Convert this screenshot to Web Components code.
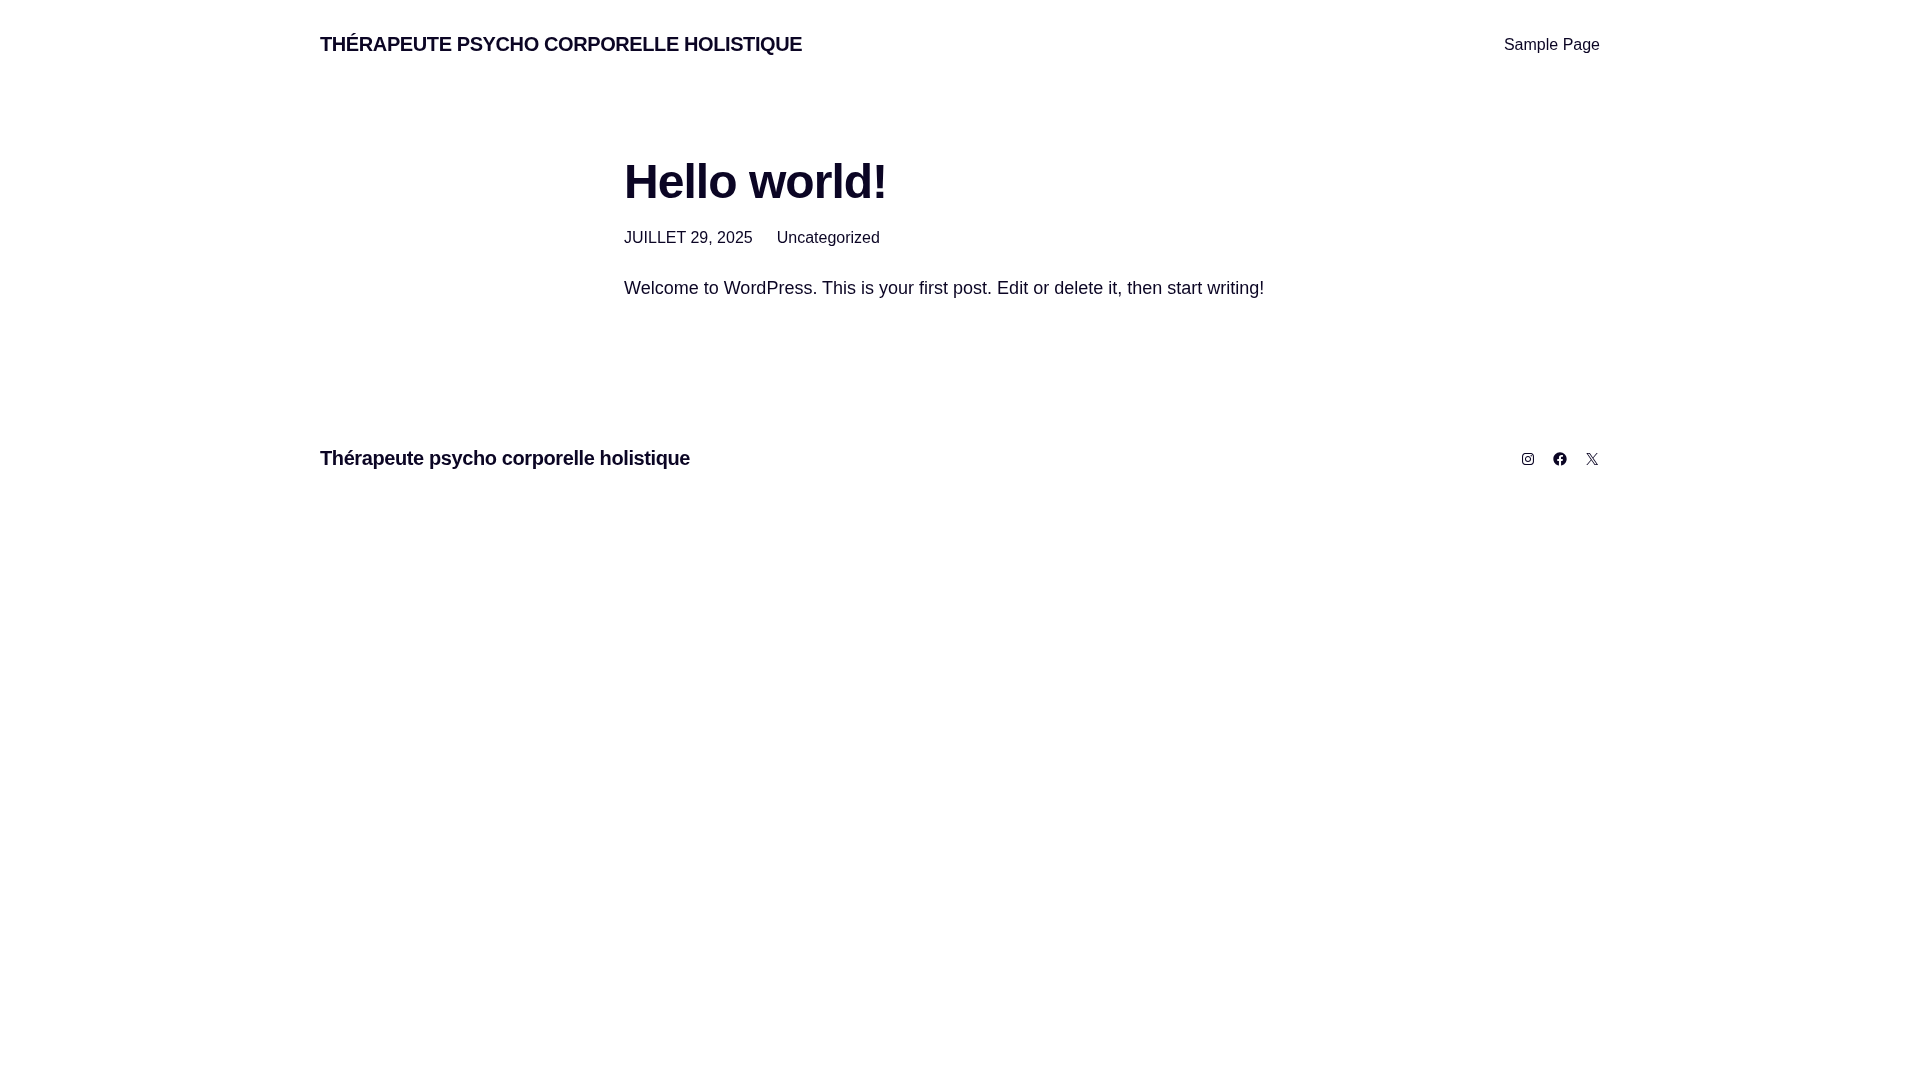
<!DOCTYPE html>
<html lang="fr">
<head>
<meta charset="utf-8">
<title>Thérapeute psycho corporelle holistique</title>
<style>
  html, body { margin: 0; background: #fff; }
  body {
    font-family: "Liberation Sans", Arial, sans-serif;
    color: #0b0524;
  }
</style>
</head>
<body>

<site-header>
  <span slot="title">THÉRAPEUTE PSYCHO CORPORELLE HOLISTIQUE</span>
  <a slot="nav">Sample Page</a>
</site-header>

<post-item>
  <span slot="title">Hello world!</span>
  <span slot="date">JUILLET 29, 2025</span>
  <span slot="category">Uncategorized</span>
  Welcome to WordPress. This is your first post. Edit or delete it, then start writing!
</post-item>

<site-footer>
  <span slot="title">Thérapeute psycho corporelle holistique</span>
  <social-links></social-links>
</site-footer>

<script>
class SiteHeader extends HTMLElement {
  constructor() {
    super();
    this.attachShadow({ mode: "open" });
    this.shadowRoot.innerHTML = `
      <style>
        :host {
          display: flex;
          justify-content: space-between;
          align-items: center;
          box-sizing: border-box;
          width: 1280px;
          height: 88px;
          margin: 0 auto;
          will-change: transform;
        }
        .title {
          font-size: 20px;
          font-weight: 700;
          letter-spacing: -0.4px;
        }
        .nav { font-size: 16px; padding-top: 2px; }
      </style>
      <div class="title"><slot name="title"></slot></div>
      <div class="nav"><slot name="nav"></slot></div>
    `;
  }
}

class PostItem extends HTMLElement {
  constructor() {
    super();
    this.attachShadow({ mode: "open" });
    this.shadowRoot.innerHTML = `
      <style>
        :host {
          display: block;
          box-sizing: border-box;
          width: 672px;
          margin: 0 auto;
          padding-top: 63px;
          will-change: transform;
        }
        h1 {
          margin: 0;
          font-size: 48px;
          line-height: 62px;
          font-weight: 700;
          letter-spacing: -0.96px;
        }
        .meta {
          display: flex;
          gap: 24px;
          margin-top: 13px;
          font-size: 16px;
          line-height: 24px;
        }
        .body {
          margin-top: 25px;
          font-size: 18px;
          line-height: 27px;
        }
      </style>
      <h1><slot name="title"></slot></h1>
      <div class="meta">
        <slot name="date"></slot>
        <slot name="category"></slot>
      </div>
      <div class="body"><slot></slot></div>
    `;
  }
}

class SiteFooter extends HTMLElement {
  constructor() {
    super();
    this.attachShadow({ mode: "open" });
    this.shadowRoot.innerHTML = `
      <style>
        :host {
          display: flex;
          justify-content: space-between;
          align-items: center;
          width: 1280px;
          margin: 141px auto 0;
          will-change: transform;
        }
        .title {
          font-size: 20px;
          line-height: 30px;
          font-weight: 700;
          letter-spacing: -0.4px;
        }
      </style>
      <div class="title"><slot name="title"></slot></div>
      <slot></slot>
    `;
  }
}

class SocialLinks extends HTMLElement {
  constructor() {
    super();
    this.attachShadow({ mode: "open" });
    this.shadowRoot.innerHTML = `
      <style>
        :host { display: flex; gap: 16px; padding-top: 1px; }
        svg { display: block; width: 16px; height: 16px; fill: currentColor; }
      </style>
      <svg viewBox="0 0 24 24"><path d="M12,4.622c2.403,0,2.688,0.009,3.637,0.052c0.877,0.04,1.354,0.187,1.671,0.31c0.42,0.163,0.72,0.358,1.035,0.673 c0.315,0.315,0.51,0.615,0.673,1.035c0.123,0.317,0.27,0.794,0.31,1.671c0.043,0.949,0.052,1.234,0.052,3.637 s-0.009,2.688-0.052,3.637c-0.04,0.877-0.187,1.354-0.31,1.671c-0.163,0.42-0.358,0.72-0.673,1.035 c-0.315,0.315-0.615,0.51-1.035,0.673c-0.317,0.123-0.794,0.27-1.671,0.31c-0.949,0.043-1.233,0.052-3.637,0.052 s-2.688-0.009-3.637-0.052c-0.877-0.04-1.354-0.187-1.671-0.31c-0.42-0.163-0.72-0.358-1.035-0.673 c-0.315-0.315-0.51-0.615-0.673-1.035c-0.123-0.317-0.27-0.794-0.31-1.671C4.631,14.688,4.622,14.403,4.622,12 s0.009-2.688,0.052-3.637c0.04-0.877,0.187-1.354,0.31-1.671c0.163-0.42,0.358-0.72,0.673-1.035 c0.315-0.315,0.615-0.51,1.035-0.673c0.317-0.123,0.794-0.27,1.671-0.31C9.312,4.631,9.597,4.622,12,4.622 M12,3 C9.556,3,9.249,3.01,8.289,3.054C7.331,3.098,6.677,3.25,6.105,3.472C5.513,3.702,5.011,4.01,4.511,4.511 c-0.5,0.5-0.808,1.002-1.038,1.594C3.25,6.677,3.098,7.331,3.054,8.289C3.01,9.249,3,9.556,3,12c0,2.444,0.01,2.751,0.054,3.711 c0.044,0.958,0.196,1.612,0.418,2.185c0.23,0.592,0.538,1.094,1.038,1.594c0.5,0.5,1.002,0.808,1.594,1.038 c0.572,0.222,1.227,0.375,2.185,0.418C9.249,20.99,9.556,21,12,21s2.751-0.01,3.711-0.054c0.958-0.044,1.612-0.196,2.185-0.418 c0.592-0.23,1.094-0.538,1.594-1.038c0.5-0.5,0.808-1.002,1.038-1.594c0.222-0.572,0.375-1.227,0.418-2.185 C20.99,14.751,21,14.444,21,12s-0.01-2.751-0.054-3.711c-0.044-0.958-0.196-1.612-0.418-2.185c-0.23-0.592-0.538-1.094-1.038-1.594 c-0.5-0.5-1.002-0.808-1.594-1.038c-0.572-0.222-1.227-0.375-2.185-0.418C14.751,3.01,14.444,3,12,3L12,3z M12,7.378 c-2.552,0-4.622,2.069-4.622,4.622S9.448,16.622,12,16.622s4.622-2.069,4.622-4.622S14.552,7.378,12,7.378z M12,15 c-1.657,0-3-1.343-3-3s1.343-3,3-3s3,1.343,3,3S13.657,15,12,15z M16.804,6.116c-0.596,0-1.08,0.484-1.08,1.08 s0.484,1.08,1.08,1.08c0.596,0,1.08-0.484,1.08-1.08S17.401,6.116,16.804,6.116z"/></svg>
      <svg viewBox="0 0 24 24"><path d="M12 2C6.5 2 2 6.5 2 12c0 5 3.7 9.1 8.4 9.9v-7H7.9V12h2.5V9.8c0-2.5 1.5-3.9 3.8-3.9 1.1 0 2.2.2 2.2.2v2.5h-1.3c-1.2 0-1.6.8-1.6 1.6V12h2.8l-.4 2.9h-2.3v7C18.3 21.1 22 17 22 12c0-5.5-4.5-10-10-10z"/></svg>
      <svg viewBox="0 0 24 24"><path d="M13.982 10.622 20.54 3h-1.554l-5.693 6.618L8.745 3H3.5l6.876 10.007L3.5 21h1.554l6.012-6.989L15.868 21h5.245l-7.131-10.378Zm-2.128 2.474-.697-.997-5.543-7.93H8l4.474 6.4.697.996 5.815 8.318h-2.387l-4.745-6.787Z"/></svg>
    `;
  }
}

customElements.define("site-header", SiteHeader);
customElements.define("post-item", PostItem);
customElements.define("site-footer", SiteFooter);
customElements.define("social-links", SocialLinks);
</script>
</body>
</html>
